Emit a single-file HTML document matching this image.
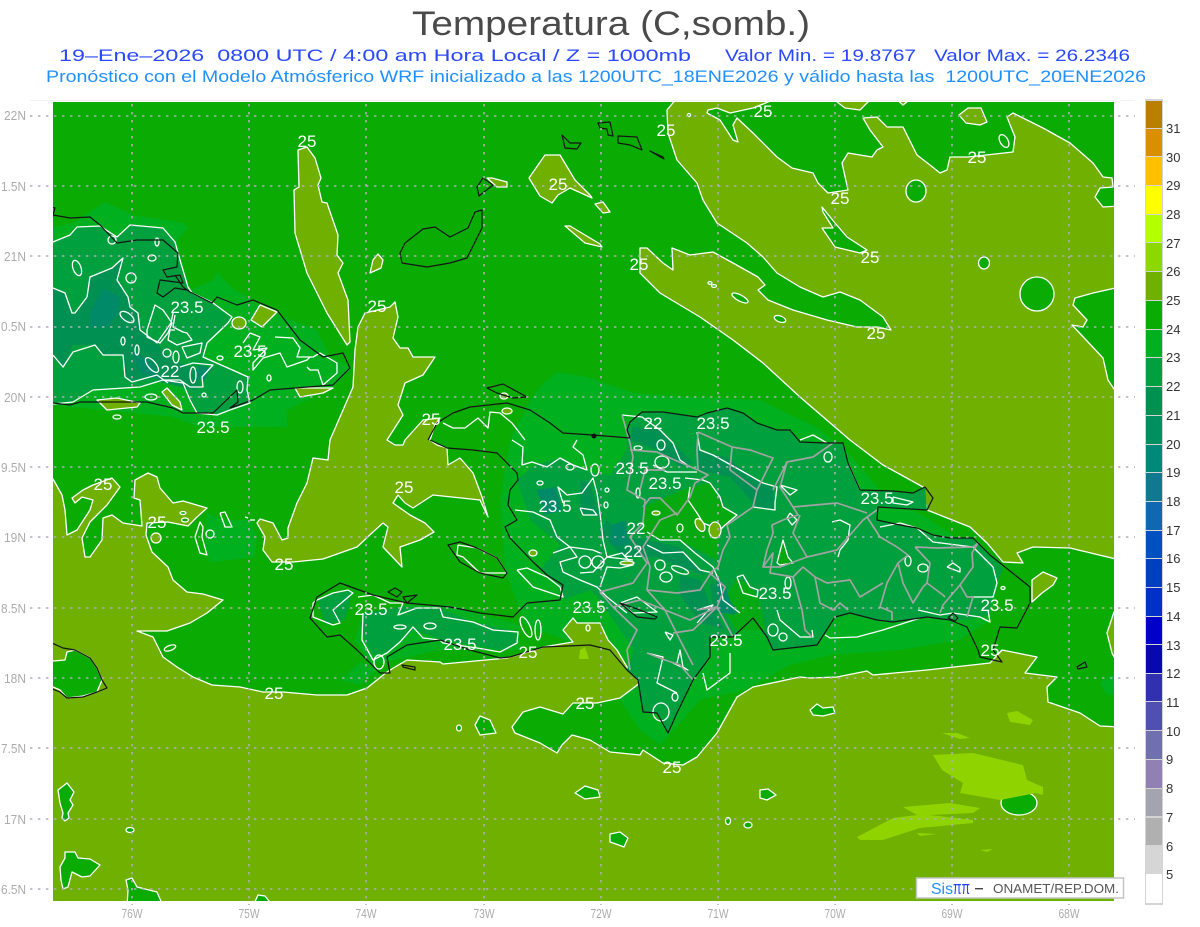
<!DOCTYPE html>
<html lang="es"><head><meta charset="utf-8"><title>Temperatura (C,somb.)</title>
<style>
html,body{margin:0;padding:0;background:#fff}
svg{display:block}
text{font-family:"Liberation Sans",sans-serif}
.w polyline,.w polygon,.w ellipse{stroke:#fff;stroke-width:1.3;stroke-linejoin:round}
.w polyline,.w .n{fill:none}
.o{fill:#6fb000}
.g{fill:#0aab02}
.k polyline,.k polygon{fill:none;stroke:#151515;stroke-width:1.2;stroke-linejoin:round}
.p polyline{fill:none;stroke:#a3a3a3;stroke-width:1.7;stroke-linejoin:round}
.l text{fill:#fff;font-size:17px;text-anchor:middle}
.a text{fill:#ababab;font-size:13px}
.c text{fill:#333;font-size:13px}
</style></head><body>
<svg width="1200" height="927" viewBox="0 0 1200 927" xmlns="http://www.w3.org/2000/svg">
<defs><clipPath id="m"><rect x="53" y="102" width="1061" height="799"/></clipPath></defs>
<rect width="1200" height="927" fill="#fff"/>
<rect x="30" y="100" width="1105" height="1" fill="#f2f2f2"/>

<text x="412" y="35" font-size="34" fill="#4a4a4a" textLength="398" lengthAdjust="spacingAndGlyphs">Temperatura (C,somb.)</text>
<text x="59" y="61" font-size="17" fill="#2a48ff" textLength="632" lengthAdjust="spacingAndGlyphs" xml:space="preserve">19–Ene–2026  0800 UTC / 4:00 am Hora Local / Z = 1000mb</text>
<text x="725" y="61" font-size="17" fill="#2a48ff" textLength="191" lengthAdjust="spacingAndGlyphs">Valor Min. = 19.8767</text>
<text x="934" y="61" font-size="17" fill="#2a48ff" textLength="196" lengthAdjust="spacingAndGlyphs">Valor Max. = 26.2346</text>
<text x="46" y="82" font-size="17" fill="#1e90ff" textLength="1100" lengthAdjust="spacingAndGlyphs" xml:space="preserve">Pronóstico con el Modelo Atmósferico WRF inicializado a las 1200UTC_18ENE2026 y válido hasta las  1200UTC_20ENE2026</text>

<g clip-path="url(#m)">
<rect x="53" y="102" width="1061" height="799" fill="#0aab02"/>
<!-- light 23-24 band -->
<g fill="#00b01e">
<polygon points="53,227 73,223 105,202 133,215 183,223 188,228 177,240 190,290 213,280 218,272 222,278 235,290 273,313 317,330 330,357 353,367 333,387 287,410 287,427 200,427 173,417 53,405"/>
<polygon points="543,383 557,372 587,377 633,393 690,397 760,400 780,410 817,427 850,455 880,490 930,520 960,540 1000,575 990,620 960,640 900,650 830,655 790,665 745,690 700,700 660,745 640,730 620,700 600,660 565,640 525,625 505,570 500,500 510,440 530,400"/>
<polygon points="360,620 400,605 450,605 520,625 520,650 440,650 395,660 370,665 355,640"/>
<polygon points="207,513 225,520 250,520 257,537 255,557 210,562 205,545"/>
<polygon points="340,680 360,662 377,670 360,685"/>
<polygon points="1100,683 1114,673 1114,695 1107,695"/>
<polygon points="1030,288 1040,283 1045,295 1035,302"/>
</g>
<!-- olive -->
<g class="w">
<polygon class="o" points="677,98 667,110 668,133 677,160 697,183 703,200 717,223 747,243 763,257 777,273 800,287 823,297 840,292 860,300 883,317 891,330 877,327 857,327 827,320 793,310 768,300 758,290 765,285 758,277 733,263 713,252 690,255 672,248 673,270 663,263 647,248 640,248 640,273 660,293 700,317 733,340 763,363 800,397 850,440 883,465 923,487 927,510 970,527 987,543 1003,562 1023,563 1017,553 1033,547 1070,548 1120,560 1120,389 1114,389 1108,380 1103,358 1072,325 1083,327 1087,320 1073,305 1075,298 1093,293 1120,287 1120,206 1103,207 1095,197 1100,188 1113,187 1112,178 1103,177 1093,163 1070,143 1043,128 1013,113 1007,117 1015,137 1013,152 968,157 950,157 947,170 940,173 930,165 917,155 903,127 887,127 877,117 863,118 870,130 883,147 877,150 872,157 848,153 842,163 848,190 828,193 818,183 813,173 792,168 777,157 753,133 737,118 733,125 738,142 733,140 720,120 707,113 708,110 717,108 730,113 753,108 778,98"/>
<polygon class="o" points="832,98 845,108 860,110 872,98"/>
<polygon class="o" points="895,98 903,105 912,98"/>
<polygon class="o" points="298,150 307,147 315,158 321,178 318,185 322,202 327,203 338,235 337,255 343,263 338,273 348,300 350,342 347,345 327,313 307,273 295,233 294,190 299,187"/>
<polygon class="o" points="370,273 373,260 378,254 383,260 381,268"/>
<polygon class="o" points="365,313 390,307 395,302 398,317 393,338 400,348 408,348 413,357 435,357 423,375 405,383 398,405 403,415 387,440 395,445 403,445 405,440 423,420 440,418 435,425 430,440 437,445 447,448 448,465 460,458 473,473 482,497 488,517 480,500 433,495 413,508 405,503 398,495 393,503 410,515 425,523 434,532 420,540 400,547 402,567 383,547 388,527 383,523 373,532 357,547 323,559 293,562 272,562 263,550 265,537 257,523 260,519 273,523 282,540 288,538 288,528 297,503 307,483 313,458 328,460 330,440 353,387 355,350 358,327"/>
<polygon class="o" points="48,479 53,479 62,495 65,510 67,535 77,530 90,510 93,500 82,497 75,503 72,498 83,490 93,485 112,478 120,487 107,505 90,522 82,538 85,557 90,557 102,540 103,518 112,515 123,523 142,526 140,500 134,498 135,480 148,473 157,477 160,488 173,503 183,501 207,508 197,517 188,526 168,522 147,523 146,535 152,552 168,567 173,580 187,592 203,594 223,600 207,613 190,623 167,631 137,631 153,637 163,657 177,667 193,677 212,685 240,687 263,692 283,692 317,695 347,695 367,688 387,672 395,667 407,660 440,662 443,664 507,658 528,652 543,647 573,642 563,630 573,618 577,623 600,623 608,640 617,650 627,667 640,683 620,698 597,703 573,703 563,714 540,707 523,712 512,727 515,733 540,743 557,753 562,745 572,735 590,740 610,752 640,755 643,750 663,763 683,765 697,757 717,733 737,697 753,687 800,677 810,678 837,677 867,671 873,675 927,670 990,663 1002,650 1037,657 1025,673 1057,677 1047,687 1048,702 1080,713 1100,726 1120,727 1120,906 48,906"/>
<polygon class="o" points="959,115 968,108 981,108 987,122 980,125 966,123"/>
<polygon class="o" points="1032,580 1043,572 1057,578 1053,585 1042,593 1032,602"/>
<polygon class="o" points="1120,611 1114,612 1107,633 1112,653 1120,668"/>
<polygon class="o" points="529,178 545,155 560,155 575,180 590,195 592,198 570,188 558,195 552,203 540,196"/>
<polygon class="o" points="487,178 492,178 507,182 507,187 497,187"/>
<polygon class="o" points="595,204 603,202 610,212 603,213"/>
<polygon class="o" points="565,226 570,226 600,244 602,247 585,243"/>
<polygon class="o" points="251,320 260,305 277,312 262,327"/>
<polygon class="o" points="97,400 117,398 140,403 137,407 107,410"/>
<polygon class="o" points="162,392 167,388 180,402 182,410 172,405"/>
<polygon class="o" points="295,388 333,388 323,393 300,397"/>
<ellipse class="o" cx="195" cy="323" rx="4" ry="8" transform="rotate(25 195 323)"/>
<ellipse class="o" cx="239" cy="323" rx="7" ry="6"/>
<ellipse class="o" cx="156" cy="538" rx="5" ry="5"/>
<ellipse class="o" cx="567" cy="523" rx="4" ry="6"/>
<ellipse class="o" cx="533" cy="553" rx="4" ry="3"/>
<ellipse class="o" cx="504" cy="396" rx="4" ry="3"/>
<ellipse class="o" cx="507" cy="411" rx="5" ry="3"/>
</g>
<!-- green islands in olive -->
<g class="w">
<ellipse class="g" cx="916" cy="191" rx="10" ry="11"/>
<polygon class="g" points="822,207 835,223 847,237 867,250 860,253 835,247 822,228 833,228 823,212"/>
<ellipse class="g" cx="984" cy="263" rx="5.5" ry="6"/>
<ellipse class="g" cx="1037" cy="294" rx="17" ry="17"/>
<ellipse class="n" cx="1004" cy="141" rx="4" ry="7" transform="rotate(-30 1004 141)"/>
<ellipse class="g" cx="780" cy="319" rx="6" ry="3" transform="rotate(20 780 319)"/>
<ellipse class="g" cx="740" cy="298" rx="9" ry="3" transform="rotate(28 740 298)"/>
<polygon class="g" points="53,661 65,660 67,652 75,650 90,658 97,668 102,680 97,692 83,696 67,698 60,690 53,687 48,687 48,661"/>
<ellipse class="g" cx="170" cy="648" rx="6" ry="2.5" transform="rotate(-20 170 648)"/>
<polygon class="g" points="58,790 67,783 74,792 70,800 73,805 68,813 69,818 65,821 62,818 63,813 60,803"/>
<ellipse class="g" cx="130" cy="830" rx="4" ry="2.5"/>
<polygon class="g" points="65,852 75,852 78,858 90,859 100,865 90,876 82,877 72,872 68,887 63,889 61,880 60,867 65,858"/>
<polygon class="g" points="126,880 132,878 137,887 157,892 163,906 127,906 128,890"/>
<polygon class="g" points="253,906 258,895 265,896 273,906"/>
<polygon class="g" points="480,716 490,720 496,733 480,735 475,725"/>
<ellipse class="g" cx="459" cy="728" rx="2.5" ry="3"/>
<polygon class="g" points="810,710 817,704 823,708 833,707 835,713 823,716 813,715"/>
<polygon class="g" points="760,790 768,789 776,795 767,800 760,798"/>
<polygon class="g" points="575,793 585,786 598,790 600,797 585,799"/>
<polygon class="g" points="610,834 620,832 628,838 624,847 616,844 610,842"/>
<ellipse class="g" cx="748" cy="825" rx="4" ry="3"/>
<ellipse class="g" cx="728" cy="821" rx="2.5" ry="3.5"/>
<ellipse class="g" cx="1019" cy="803" rx="18" ry="12"/>
<ellipse class="g" cx="183" cy="513" rx="3" ry="1.5"/>
<ellipse class="g" cx="185" cy="520" rx="3.5" ry="2"/>
<ellipse class="g" cx="710" cy="283" rx="2" ry="1.3"/>
<ellipse class="g" cx="714" cy="286" rx="2.5" ry="1.3"/>
<ellipse class="g" cx="689" cy="115" rx="1.5" ry="1.5"/>
</g>
<!-- 26+ light -->
<g fill="#8fd400">
<polygon points="933,755 973,753 1023,765 1027,780 1043,787 1043,795 1036,793 1000,800 960,793 963,783 942,770"/>
<polygon points="857,837 893,818 917,815 903,807 950,803 980,808 973,813 930,815 973,820 973,823 920,828 883,840 860,840"/>
<polygon points="1007,713 1017,711 1033,720 1030,725 1010,722"/>
<polygon points="942,733 957,733 970,738 960,739"/>
<polygon points="980,850 993,849 987,852"/>
<polygon points="917,833 937,834 920,836"/>
<polygon points="580,650 585,647 589,659 579,659"/>
</g>
<!-- medium -->
<g fill="#00a03e">
<polygon points="53,242 70,235 77,227 100,226 117,237 130,225 163,228 175,242 180,260 188,287 192,293 207,300 213,303 232,317 228,323 207,343 203,357 237,372 248,377 247,390 250,403 230,410 217,415 197,413 190,400 183,383 163,380 140,387 93,390 73,402 53,404"/>
<polygon points="627,430 630,422 642,412 663,412 697,417 707,413 727,408 743,413 757,423 777,430 790,430 800,442 827,443 843,443 848,463 860,490 893,491 913,493 925,487 927,510 878,507 877,520 900,525 917,528 933,535 950,538 973,538 990,555 1003,568 993,597 988,615 967,620 950,620 927,617 893,622 877,620 850,613 835,617 817,645 773,650 765,637 753,618 733,637 710,637 710,657 693,680 677,713 668,733 657,713 643,712 638,680 627,670 640,630 620,600 625,520"/>
<polygon points="517,480 535,465 560,458 590,472 610,475 630,445 640,520 650,560 680,600 710,640 680,690 657,712 640,660 627,640 600,600 590,590 563,600 560,585 540,570 560,545 530,520"/>
<polygon points="362,613 400,607 440,608 473,622 518,632 517,643 500,650 443,640 413,630 387,652 373,655 362,635"/>
<polygon points="318,600 333,593 353,590 345,620 325,625"/>
</g>
<!-- central valley lighter -->
<polygon fill="#06a910" points="690,487 710,483 723,507 737,515 720,530 717,560 693,547 677,540 660,540 643,533 643,507"/>
<polygon fill="#06a910" points="777,563 783,540 788,557 793,563 780,565"/>
<polygon fill="#04a914" points="736,578 750,585 760,600 765,630 735,630 722,605"/>
<!-- dark -->
<g fill="#009052">
<polygon points="53,288 65,293 72,313 75,313 87,297 90,277 112,268 123,258 117,280 128,297 130,307 138,313 140,330 157,343 171,360 200,370 215,368 200,378 200,385 195,390 160,382 157,378 132,381 125,377 124,355 103,355 95,345 73,345 63,367 53,355"/>
<polygon points="633,427 660,430 693,463 680,467 657,450 630,440"/>
<polygon points="697,450 727,457 760,483 773,487 775,510 757,507 730,477 697,470"/>
<polygon points="580,480 590,483 600,517 580,513"/>
<polygon points="607,520 623,537 647,540 680,547 700,570 727,597 740,613 713,613 710,577 680,567 657,557 623,557 600,533"/>
<polygon points="680,575 700,580 713,610 725,630 700,622 680,595"/>
</g>
<g fill="#008a68">
<polygon points="103,288 120,297 118,313 107,327 90,327 90,313"/>
<polygon points="133,352 152,362 160,380 140,372"/>
<polygon points="537,490 556,487 562,510 545,515"/>
<polygon points="612,525 626,520 628,545 612,545"/>
<polygon points="715,575 725,585 735,615 720,612"/>
<polygon points="198,365 210,368 205,380 195,378"/>
</g>
<!-- white contours -->
<g class="w">
<polyline points="53,242 70,235 77,227 100,226 117,237 130,225 163,228 175,242 180,260 188,287 192,293 207,300 213,303 232,317 228,323 207,343 203,357 237,372 248,377 247,390 250,403 230,410 217,415 197,413 190,400 183,383 163,380 140,387 93,390 73,402 53,404"/>
<polyline points="53,288 65,293 72,313 75,313 87,297 90,277 112,268 123,258 117,280 128,297 130,307 138,313 140,330 157,343 171,323 173,313"/>
<polyline points="53,355 63,367 73,352 95,345 103,355 123,355 125,377 132,382 157,375 168,383"/>
<polyline points="147,330 155,305 163,310 172,323 168,333 160,343 147,337 147,330"/>
<polyline points="175,315 173,327 183,332 187,333 192,340 177,345 168,340 170,330 175,330"/>
<polyline points="182,347 202,343 200,353 187,358 182,347"/>
<polyline points="243,343 250,333 260,337 253,350 267,348 253,363 253,370 263,358 280,353 287,367 307,360 310,357"/>
<polyline points="275,337 293,338 300,348 297,357 313,357 320,353 337,363 337,373 323,385 318,370 310,370 307,367"/>
<polyline points="163,380 180,380 190,387 203,387 202,377 213,365 193,363 180,367"/>
<polyline points="443,423 453,428 465,428 478,418 488,428 490,412 500,413 512,423 525,440"/>
<polyline points="512,440 523,447 522,465 532,462 547,467 560,458 573,465 587,470 583,455 573,447 577,440"/>
<polyline points="515,510 533,512 550,520 557,537 570,547 593,550 600,553"/>
<polyline points="563,503 558,487 567,495 582,493 593,478 597,493 600,513 603,540 607,557 633,560"/>
<polyline points="517,570 527,568 547,577 560,587 563,597 533,587 517,570"/>
<polyline points="458,545 477,548 497,558 507,573 480,573 463,557 457,555 458,545"/>
<polyline points="313,603 317,600 333,593 348,590 353,593 333,610 340,623 333,625 313,617 313,603"/>
<polyline points="363,613 362,640 373,660 387,653 400,642 413,627 423,638 440,640 443,643 477,648 500,652 517,643 518,632 493,630 473,622 443,617 440,608 417,608 398,615 403,603 390,603 373,595 358,597"/>
<polyline points="553,553 570,547 577,557 560,562 563,572 580,580 597,587 607,597 627,613"/>
<polyline points="580,573 593,572 607,557 622,553 633,565 620,568 607,567 600,587"/>
<polyline points="622,415 642,417 660,430 673,443 680,460 690,467"/>
<polyline points="697,432 700,450 713,455 740,470 763,483 777,487 775,503 775,510 753,507"/>
<polyline points="653,465 667,472 697,472"/>
<polyline points="685,478 703,480 710,483 720,497 723,507 737,515 725,525 720,530"/>
<polyline points="690,487 688,500 697,513 703,523 713,527"/>
<polyline points="647,532 660,540 680,540 695,553 713,567 720,583 723,600 740,613"/>
<polyline points="647,545 663,553 683,552 700,570 713,573"/>
<polyline points="780,485 797,490 790,495 780,485"/>
<polyline points="777,563 783,540 788,557 793,563 780,565 777,563"/>
<polyline points="790,513 797,520 792,525 787,518 790,513"/>
<polyline points="737,577 743,575 750,587 758,590 757,597 743,593 737,577"/>
<polyline points="832,522 840,520 850,525 848,540 840,550 838,557"/>
<polyline points="800,440 813,435 827,443"/>
<polyline points="848,463 860,490"/>
<polyline points="893,497 913,502 907,505 893,503 893,497"/>
<polyline points="880,527 900,523 917,528 933,542 973,547 993,567 997,583 993,597 970,597"/>
<polyline points="918,610 940,615 953,613 980,617 990,622 988,610"/>
<polyline points="947,567 953,563 960,568 960,572 947,567"/>
<polyline points="825,635 830,638 857,637 883,630 920,618"/>
<polyline points="777,610 780,620 800,637 813,637 812,630"/>
<polyline points="647,653 663,657 657,683 677,693"/>
<polyline points="730,653 730,673 707,690 703,673"/>
<polyline points="677,663 680,650 683,667 688,670 673,663"/>
<polyline points="665,632 673,635 670,640 665,632"/>
<polyline points="620,603 637,597 657,612 633,613 620,603"/>
<polyline points="697,610 713,605 697,623"/>
<polyline points="580,508 593,510 597,515 583,515 580,508"/>
<polyline points="195,537 200,522 203,527 202,537 207,555 200,553 195,537"/>
<polyline points="220,513 225,512 232,527 225,527 220,513"/>
<polyline points="245,517 248,518"/><polyline points="250,520 255,520"/>
<ellipse class="n" cx="210" cy="534" rx="4" ry="4"/>
<ellipse class="n" cx="77" cy="268" rx="4" ry="8" transform="rotate(-20 77 268)"/>
<ellipse class="n" cx="131" cy="278" rx="5" ry="5"/>
<ellipse class="n" cx="152" cy="258" rx="4" ry="3"/>
<ellipse class="n" cx="157" cy="242" rx="2" ry="4"/>
<ellipse class="n" cx="112" cy="240" rx="4" ry="4"/>
<ellipse class="n" cx="127" cy="317" rx="8" ry="4" transform="rotate(35 127 317)"/>
<ellipse class="n" cx="123" cy="341" rx="2" ry="4"/>
<ellipse class="n" cx="137" cy="350" rx="2" ry="5"/>
<ellipse class="n" cx="152" cy="365" rx="4" ry="9" transform="rotate(-40 152 365)"/>
<ellipse class="n" cx="167" cy="353" rx="4" ry="4"/>
<ellipse class="n" cx="176" cy="357" rx="3" ry="6"/>
<ellipse class="n" cx="193" cy="375" rx="3" ry="8"/>
<ellipse class="n" cx="220" cy="358" rx="3" ry="2"/>
<ellipse class="n" cx="240" cy="387" rx="3" ry="6"/>
<ellipse class="n" cx="269" cy="378" rx="2" ry="3"/>
<ellipse class="n" cx="204" cy="395" rx="2" ry="2"/>
<ellipse class="n" cx="117" cy="417" rx="4" ry="2"/>
<ellipse class="n" cx="151" cy="397" rx="6" ry="3"/>
<ellipse class="n" cx="379" cy="662" rx="5" ry="7"/>
<ellipse class="n" cx="400" cy="627" rx="6" ry="2"/>
<ellipse class="n" cx="430" cy="626" rx="6" ry="3"/>
<ellipse class="n" cx="526" cy="627" rx="4" ry="11" transform="rotate(-25 526 627)"/>
<ellipse class="n" cx="538" cy="630" rx="3" ry="10"/>
<ellipse class="n" cx="588" cy="628" rx="2" ry="3"/>
<ellipse class="n" cx="540" cy="483" rx="3" ry="2"/>
<ellipse class="n" cx="570" cy="467" rx="4" ry="3"/>
<ellipse class="n" cx="595" cy="470" rx="4" ry="6"/>
<ellipse class="n" cx="607" cy="490" rx="2" ry="2"/>
<ellipse class="n" cx="606" cy="505" rx="2" ry="3"/>
<ellipse class="n" cx="585" cy="562" rx="6" ry="6"/>
<ellipse class="n" cx="598" cy="562" rx="6" ry="6"/>
<ellipse class="n" cx="661" cy="445" rx="4" ry="5"/>
<ellipse class="n" cx="662" cy="462" rx="7" ry="6"/>
<ellipse class="n" cx="638" cy="448" rx="4" ry="2"/>
<ellipse class="n" cx="638" cy="493" rx="2" ry="5"/>
<ellipse class="o" cx="656" cy="513" rx="4" ry="2"/>
<ellipse class="n" cx="680" cy="528" rx="3" ry="4"/>
<ellipse class="n" cx="660" cy="565" rx="5" ry="5"/>
<ellipse class="n" cx="666" cy="577" rx="6" ry="5"/>
<ellipse class="n" cx="680" cy="570" rx="9" ry="3" transform="rotate(20 680 570)"/>
<ellipse class="o" cx="700" cy="525" rx="4" ry="7" transform="rotate(-30 700 525)"/>
<ellipse class="o" cx="715" cy="530" rx="6" ry="8"/>
<ellipse class="o" cx="627" cy="563" rx="7" ry="2"/>
<ellipse class="n" cx="788" cy="583" rx="3" ry="6"/>
<ellipse class="n" cx="773" cy="630" rx="5" ry="6"/>
<ellipse class="n" cx="783" cy="637" rx="4" ry="4"/>
<ellipse class="n" cx="828" cy="457" rx="4" ry="5"/>
<ellipse class="n" cx="908" cy="561" rx="3" ry="5"/>
<ellipse class="n" cx="923" cy="568" rx="5" ry="4"/>
<ellipse class="n" cx="661" cy="712" rx="8" ry="9"/>
<ellipse class="n" cx="675" cy="697" rx="3" ry="4"/>
<ellipse class="n" cx="1003" cy="588" rx="2" ry="1.5"/>
</g>
<!-- province lines -->
<g class="p">
<polyline points="622,415 630,443 633,457 627,490 645,500 643,523 630,537 647,563 633,583 600,592 613,607 637,630 627,650 630,670"/>
<polyline points="630,450 657,452 670,458 698,470 708,475 695,483 690,497 677,515 660,498 650,498 643,507"/>
<polyline points="698,432 697,450 698,470"/>
<polyline points="698,432 732,447 730,470 757,490 773,458 750,450 732,447"/>
<polyline points="757,490 753,507 727,525 730,537 723,550 718,567 710,573 725,587 717,607 693,630 673,633"/>
<polyline points="677,513 660,520 643,547 650,567 647,590 677,593 700,590 713,570"/>
<polyline points="773,490 787,462 813,457 833,443"/>
<polyline points="787,462 780,487 793,507 837,503 867,513"/>
<polyline points="793,507 798,515 783,520 772,525 773,533 767,550 763,567 780,567 807,557 793,533 800,515"/>
<polyline points="807,557 837,550 863,520 877,510"/>
<polyline points="867,517 880,537 897,547 908,555 898,563 887,583 880,607 892,612 892,620"/>
<polyline points="803,567 815,577 827,583 850,580 860,597 883,583"/>
<polyline points="815,577 820,603 833,610 840,603 848,610"/>
<polyline points="803,567 793,577 770,573 773,553 763,567"/>
<polyline points="793,577 802,610 805,630 812,637"/>
<polyline points="898,563 903,583 913,603 923,587 927,583 930,563 915,547"/>
<polyline points="915,547 937,548 973,547 978,543 972,553 973,567 960,585 967,597 973,597 967,617"/>
<polyline points="960,585 943,605 940,613"/>
<polyline points="927,583 943,595 945,597"/>
<polyline points="647,653 665,660 680,665 693,680"/>
<polyline points="613,607 640,600 665,610 690,620 717,607"/>
<polyline points="640,490 645,470 665,470"/>
<polyline points="697,610 717,607 733,637"/>
<polyline points="647,590 665,610 680,640 693,665"/>
</g>
<!-- coast -->
<g class="k">
<polyline points="40,405 53,403 70,405 80,402 147,402 173,408 183,413 213,413 237,390 238,402 230,408 253,400 270,390 333,385 350,368 343,353 323,357 300,340 277,310 253,300 237,305 217,297 212,303 190,292 183,287 175,275"/>
<polyline points="34,203 55,208 53,215 70,218 90,217 100,225 117,243 137,240 163,240 178,253 177,267 163,270 167,277 180,275 183,283 160,280 157,293 163,297 175,288 187,290"/>
<polyline points="47,213 53,216 50,221 46,216 47,213"/>
<polyline points="34,632 45,640 63,648 75,650 90,658 97,668 102,680 107,688 97,692 83,697 67,698 60,692 45,686 34,684"/>
<polygon points="400,253 405,243 423,229 435,227 450,237 468,228 475,212 482,210 482,228 467,258 450,263 427,267 402,263"/>
<polygon points="477,187 483,178 493,185 479,196"/>
<polygon points="562,135 565,148 577,149 581,143 570,143"/>
<polygon points="598,123 610,122 613,136 608,135 607,129 600,128"/>
<polygon points="618,136 637,137 642,150 630,145 618,143"/>
<polygon points="650,151 663,157 664,159"/>
<polyline points="428,440 437,423 453,413 470,407 507,403 530,410 550,423 563,433 593,435 630,438"/>
<polyline points="430,440 447,448 473,450 497,453 517,473 518,480 510,490 508,505 517,520 505,527 510,538 533,562 547,575 563,585 560,600 527,603 513,617 480,613 450,607 407,603 373,595 340,583 317,597 310,618 327,637 340,635 357,650 380,673 390,673 387,657 407,645 440,640 470,650 500,658 510,657 543,647 590,645 610,650 627,670 638,680 643,712 657,713 668,733 677,713 693,680 710,657 710,637 733,637 753,618 767,637 773,650 817,645 835,617 850,613 877,620 893,622 927,617 950,620 967,627 978,650 980,657 1002,662 993,650 1000,627 1017,628 1030,603 1030,587 990,555 973,538 950,538 933,535 917,528 900,525 877,520 878,507 927,510 933,498 925,487 913,493 893,491 860,490 848,463 843,443 827,443 800,442 790,430 777,430 757,423 743,413 727,408 707,413 697,417 663,412 642,412 630,422 627,430 630,438"/>
<polygon points="448,545 460,542 477,548 497,558 507,573 503,578 480,573 460,562"/>
<polygon points="487,388 503,384 527,397 513,398 497,393"/>
<polygon points="388,592 395,588 402,592 397,597"/>
<polygon points="403,597 417,595 407,603"/>
<polygon points="402,665 415,667 415,670 403,667"/>
<polygon points="1077,667 1085,662 1087,667 1078,669"/>
<polygon points="948,618 953,613 958,618 955,621"/>
<polygon points="620,603 640,610 657,617 655,619 637,617"/>
</g>
<circle cx="594" cy="436" r="2.5" fill="#111"/>
</g>

<!-- graticule -->
<g stroke="#b4aabc" stroke-width="1.6" fill="none" stroke-dasharray="2.4 5.6">
<path d="M132 104V905M249 104V905M366 104V905M484 104V905M601 104V905M718 104V905M835 104V905M952 104V905M1069 104V905"/>
<path d="M30 116H1135M30 186H1135M30 256H1135M30 327H1135M30 397H1135M30 467H1135M30 537H1135M30 608H1135M30 678H1135M30 748H1135M30 819H1135M30 889H916"/>
</g>

<!-- labels -->
<g class="l">
<text x="307" y="147">25</text><text x="666" y="136">25</text><text x="763" y="117">25</text><text x="977" y="163">25</text>
<text x="558" y="190">25</text><text x="840" y="204">25</text><text x="870" y="263">25</text><text x="639" y="270">25</text>
<text x="377" y="312">25</text><text x="876" y="339">25</text><text x="431" y="425">25</text><text x="404" y="493">25</text>
<text x="103" y="490">25</text><text x="157" y="528">25</text><text x="284" y="570">25</text><text x="528" y="658">25</text>
<text x="990" y="656">25</text><text x="274" y="699">25</text><text x="585" y="709">25</text><text x="672" y="773">25</text>
<text x="187" y="313">23.5</text><text x="250" y="357">23.5</text><text x="213" y="433">23.5</text><text x="713" y="429">23.5</text>
<text x="632" y="474">23.5</text><text x="665" y="489">23.5</text><text x="555" y="512">23.5</text><text x="877" y="504">23.5</text>
<text x="775" y="599">23.5</text><text x="997" y="611">23.5</text><text x="371" y="615">23.5</text><text x="589" y="613">23.5</text>
<text x="460" y="650">23.5</text><text x="726" y="646">23.5</text>
<text x="653" y="429">22</text><text x="170" y="377">22</text><text x="636" y="534">22</text><text x="633" y="557">22</text>
</g>

<!-- axis labels -->
<g class="a" text-anchor="end">
<text x="26" y="120" textLength="22" lengthAdjust="spacingAndGlyphs">22N</text><text x="26" y="191" textLength="25" lengthAdjust="spacingAndGlyphs">1.5N</text><text x="26" y="261" textLength="22" lengthAdjust="spacingAndGlyphs">21N</text><text x="26" y="331" textLength="25" lengthAdjust="spacingAndGlyphs">0.5N</text>
<text x="26" y="402" textLength="22" lengthAdjust="spacingAndGlyphs">20N</text><text x="26" y="472" textLength="25" lengthAdjust="spacingAndGlyphs">9.5N</text><text x="26" y="542" textLength="22" lengthAdjust="spacingAndGlyphs">19N</text><text x="26" y="613" textLength="25" lengthAdjust="spacingAndGlyphs">8.5N</text>
<text x="26" y="683" textLength="22" lengthAdjust="spacingAndGlyphs">18N</text><text x="26" y="753" textLength="25" lengthAdjust="spacingAndGlyphs">7.5N</text><text x="26" y="824" textLength="22" lengthAdjust="spacingAndGlyphs">17N</text><text x="26" y="894" textLength="25" lengthAdjust="spacingAndGlyphs">6.5N</text>
</g>
<g class="a" text-anchor="middle">
<text x="132" y="918" textLength="21" lengthAdjust="spacingAndGlyphs">76W</text><text x="249" y="918" textLength="21" lengthAdjust="spacingAndGlyphs">75W</text><text x="366" y="918" textLength="21" lengthAdjust="spacingAndGlyphs">74W</text><text x="484" y="918" textLength="21" lengthAdjust="spacingAndGlyphs">73W</text>
<text x="601" y="918" textLength="21" lengthAdjust="spacingAndGlyphs">72W</text><text x="718" y="918" textLength="21" lengthAdjust="spacingAndGlyphs">71W</text><text x="835" y="918" textLength="21" lengthAdjust="spacingAndGlyphs">70W</text><text x="952" y="918" textLength="21" lengthAdjust="spacingAndGlyphs">69W</text><text x="1069" y="918" textLength="21" lengthAdjust="spacingAndGlyphs">68W</text>
</g>

<!-- legend box -->
<rect x="916.5" y="878" width="207" height="20" fill="#fff" stroke="#c4c4c4" stroke-width="1.5"/>
<text x="931" y="894" font-size="16" fill="#1e90ff" textLength="22" lengthAdjust="spacingAndGlyphs">Sis</text>
<text x="953" y="894" font-size="18" fill="#2244ff" textLength="17" lengthAdjust="spacingAndGlyphs">ππ</text>
<rect x="975" y="888" width="8" height="1.4" fill="#444"/>
<text x="993" y="893" font-size="13" fill="#555" textLength="126" lengthAdjust="spacingAndGlyphs">ONAMET/REP.DOM.</text>

<!-- colour bar -->
<rect x="1145" y="99" width="18" height="806" fill="#d4d4d4"/>
<g>
<rect x="1146" y="101" width="16" height="27" fill="#b98000"/>
<rect x="1146" y="129" width="16" height="27" fill="#d89000"/>
<rect x="1146" y="157" width="16" height="28" fill="#ffc000"/>
<rect x="1146" y="186" width="16" height="28" fill="#ffff00"/>
<rect x="1146" y="215" width="16" height="27" fill="#b4ff00"/>
<rect x="1146" y="243" width="16" height="28" fill="#8cd800"/>
<rect x="1146" y="272" width="16" height="28" fill="#6fb000"/>
<rect x="1146" y="301" width="16" height="28" fill="#0aab02"/>
<rect x="1146" y="330" width="16" height="27" fill="#00b020"/>
<rect x="1146" y="358" width="16" height="28" fill="#00a040"/>
<rect x="1146" y="387" width="16" height="28" fill="#009050"/>
<rect x="1146" y="416" width="16" height="28" fill="#009060"/>
<rect x="1146" y="445" width="16" height="27" fill="#008878"/>
<rect x="1146" y="473" width="16" height="28" fill="#107890"/>
<rect x="1146" y="502" width="16" height="28" fill="#1068b0"/>
<rect x="1146" y="531" width="16" height="27" fill="#0050c0"/>
<rect x="1146" y="559" width="16" height="28" fill="#0040c0"/>
<rect x="1146" y="588" width="16" height="28" fill="#0030c8"/>
<rect x="1146" y="617" width="16" height="27" fill="#0000c8"/>
<rect x="1146" y="645" width="16" height="28" fill="#0808b0"/>
<rect x="1146" y="674" width="16" height="27" fill="#3030b0"/>
<rect x="1146" y="702" width="16" height="28" fill="#5050b0"/>
<rect x="1146" y="731" width="16" height="28" fill="#7070b0"/>
<rect x="1146" y="760" width="16" height="28" fill="#9080b4"/>
<rect x="1146" y="789" width="16" height="27" fill="#a4a4b0"/>
<rect x="1146" y="818" width="16" height="27" fill="#b0b0b0"/>
<rect x="1146" y="846" width="16" height="28" fill="#d6d6d6"/>
<rect x="1146" y="874" width="16" height="29" fill="#ffffff"/>
</g>
<g class="c">
<text x="1166" y="133">31</text><text x="1166" y="162">30</text><text x="1166" y="190">29</text><text x="1166" y="219">28</text>
<text x="1166" y="248">27</text><text x="1166" y="276">26</text><text x="1166" y="305">25</text><text x="1166" y="334">24</text>
<text x="1166" y="362">23</text><text x="1166" y="391">22</text><text x="1166" y="420">21</text><text x="1166" y="449">20</text>
<text x="1166" y="477">19</text><text x="1166" y="506">18</text><text x="1166" y="535">17</text><text x="1166" y="563">16</text>
<text x="1166" y="592">15</text><text x="1166" y="621">14</text><text x="1166" y="650">13</text><text x="1166" y="678">12</text>
<text x="1166" y="707">11</text><text x="1166" y="736">10</text><text x="1166" y="764">9</text><text x="1166" y="793">8</text>
<text x="1166" y="822">7</text><text x="1166" y="851">6</text><text x="1166" y="879">5</text>
</g>
</svg>
</body></html>
